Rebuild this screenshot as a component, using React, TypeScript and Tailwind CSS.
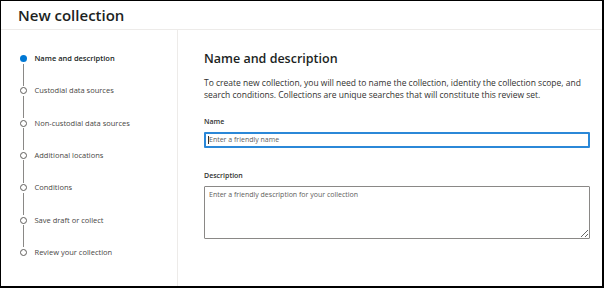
import React from "react";

const STEPS = [
  "Name and description",
  "Custodial data sources",
  "Non-custodial data sources",
  "Additional locations",
  "Conditions",
  "Save draft or collect",
  "Review your collection",
];

function StepList() {
  return (
    <div className="pl-[19px] pt-[25px]">
      {STEPS.map((label, i) => {
        const active = i === 0;
        const last = i === STEPS.length - 1;
        return (
          <div key={label} className="flex">
            <div className="flex flex-col items-center w-[7px] shrink-0">
              <div
                className={
                  active
                    ? "w-[7px] h-[7px] rounded-full bg-[#0078d4]"
                    : "w-[7px] h-[7px] rounded-full border border-[#605e5c] bg-white"
                }
              />
              {!last && (
                <div className="h-[25.33px] py-[1.5px]">
                  <div className="w-px h-full bg-[#8a8886]" />
                </div>
              )}
            </div>
            <div
              className={`ml-[7.5px] h-[7px] flex items-center text-[7.5px] whitespace-nowrap ${
                active ? "font-semibold text-[#201f1e]" : "text-[#484644]"
              }`}
            >
              {label}
            </div>
          </div>
        );
      })}
    </div>
  );
}

export default function App() {
  return (
    <div className="w-[604px] h-[288px] bg-white border-l border-t border-r-2 border-b-2 border-black flex flex-col font-['Open_Sans',sans-serif] text-[#323130] overflow-hidden">
      {/* Header */}
      <div className="h-[29px] shrink-0 border-b border-[#edebe9] pl-[17px] flex items-center">
        <h1 className="text-[15px] leading-[20px] font-semibold text-[#201f1e]">New collection</h1>
      </div>

      <div className="flex flex-1 min-h-0">
        {/* Wizard steps */}
        <div className="w-[177px] shrink-0 border-r border-[#edebe9]">
          <StepList />
        </div>

        {/* Form */}
        <div className="flex-1 pl-[26px] pr-[12px] pt-[21px]">
          <h2 className="text-[12.5px] leading-[16px] font-semibold text-[#201f1e]">Name and description</h2>
          <p className="mt-[10px] text-[8.5px] leading-[11.5px] text-[#323130] whitespace-nowrap">
            To create new collection, you will need to name the collection, identity the collection scope, and
            <br />
            search conditions. Collections are unique searches that will constitute this review set.
          </p>

          <label className="block mt-[16.5px] text-[7px] leading-[10px] font-semibold text-[#323130]">Name</label>
          <div className="relative mt-[5px] w-[386px]">
            <input
              className="block w-full h-[16.6px] border-2 border-[#2b88d8] rounded-[1px] px-[3px] text-[7px] outline-none placeholder:text-[#605e5c]"
              placeholder="Enter a friendly name"
            />
            <span className="absolute left-[4px] top-[4px] w-px h-[8.6px] bg-[#323130]" />
          </div>

          <label className="block mt-[23px] text-[7px] leading-[10px] font-semibold text-[#323130]">Description</label>
          <textarea
            className="block mt-[5px] w-[386px] h-[52.6px] border border-[#8a8886] rounded-[1px] px-[4px] py-[3px] text-[7px] leading-[10px] outline-none placeholder:text-[#605e5c]"
            placeholder="Enter a friendly description for your collection"
          />
        </div>
      </div>
    </div>
  );
}
